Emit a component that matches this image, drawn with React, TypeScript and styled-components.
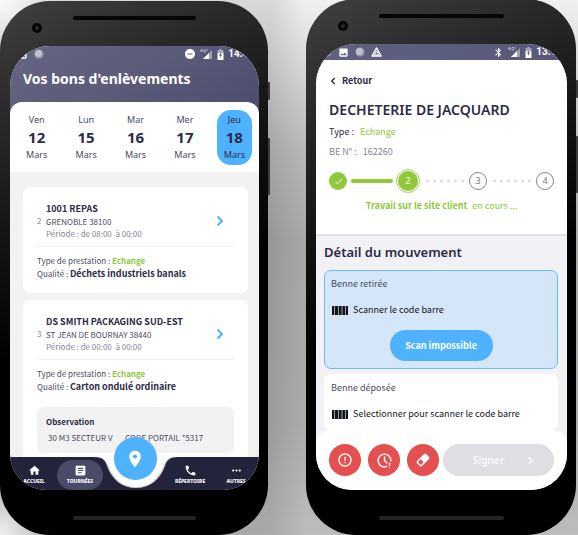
import React from "react";
import styled, { createGlobalStyle, css } from "styled-components";
import {
  MdArticle,
  MdBluetooth,
  MdCheck,
  MdDoNotDisturbOn,
  MdErrorOutline,
  MdHome,
  MdImage,
  MdLocationOn,
  MdMoreHoriz,
  MdPhone,
} from "react-icons/md";
import { TbClockExclamation } from "react-icons/tb";

const ui = '"Noto Sans", "Open Sans", sans-serif';
const body = '"Noto Sans CJK JP", "Noto Sans", sans-serif';

const color = {
  ink: "#2b2b45",
  text: "#4b4b63",
  muted: "#85859a",
  blue: "#4fb2ff",
  green: "#8fc93a",
  red: "#e44f4f",
  nav: "#23233b",
  page: "#f2f2f2",
};

const GlobalStyle = createGlobalStyle`
  *, *::before, *::after { box-sizing: border-box; }
  body { margin: 0; background: #a8a8a8; }
  button { font: inherit; color: inherit; border: 0; padding: 0; background: none; cursor: pointer; }
  a { color: inherit; text-decoration: none; }
  h1, h2, h3, p, ol, ul, dl { margin: 0; padding: 0; }
  ol, ul { list-style: none; }
`;

/* ---------- device ---------- */

const Stage = styled.main`
  display: flex;
  gap: 38px;
  height: 100vh;
  min-height: 535px;
  padding-right: 2px;
  overflow: hidden;
  font-family: ${ui};
  color: ${color.ink};
  background:
    radial-gradient(circle at 0 0, #fafafa 0, rgba(250, 250, 250, 0) 60px),
    radial-gradient(circle at 0 100%, #f2f2f2 0, rgba(242, 242, 242, 0) 60px),
    linear-gradient(90deg, rgba(0, 0, 0, 0.1) 270px, rgba(0, 0, 0, 0) 306px),
    linear-gradient(180deg, #f0f0f0 0, #dadada 60px, #b8b8b8 150px, #a8a8a8 240px, #acacac 420px, #bcbcbc 100%);
`;

const Phone = styled.section<{ $lift?: boolean }>`
  position: relative;
  flex: ${(p) => (p.$lift ? 270 : 268)} 1 0;
  min-width: 0;
  display: flex;
  flex-direction: column;
  margin-top: ${(p) => (p.$lift ? "-1px" : "1px")};
  padding: 0 9px 0 10px;
  border-radius: 50px;
  background: linear-gradient(155deg, #404040 0, #2c2c2c 16%, #141414 36%, #000 56%);
`;

const SideKeys = styled.div`
  position: absolute;
  top: 81px;
  left: 100%;
  width: 2px;
  display: grid;
  grid-template-rows: 18px 57px;
  gap: 38px;

  i {
    background: #3c3c3c;
    border-radius: 0 1px 1px 0;
  }
`;

const Earpiece = styled.div`
  flex: none;
  display: grid;
  grid-template-columns: 46px 1fr 46px;
  align-items: start;
  height: 45px;
  padding: 15px 17px 0;
`;

const Camera = styled.span`
  width: 10px;
  height: 10px;
  margin: 7px 0 0 5px;
  border-radius: 50%;
  border: 3px solid #050505;
  background: #2b2b2b;
`;

const Slot = styled.span<{ $dark?: boolean }>`
  height: 4px;
  border-radius: 2px;
  background: ${(p) => (p.$dark ? "#060606" : "#242424")};
`;

const Chin = styled.div`
  flex: none;
  height: 45px;
  padding: 26px 63px 0;
  display: grid;
  align-items: start;
`;

const Screen = styled.div`
  flex: 1;
  min-height: 0;
  display: flex;
  flex-direction: column;
  overflow: hidden;
  border-radius: 40px 40px 36px 36px;
  background: ${color.page};
`;

const Device = ({ lift, label, children }: { lift?: boolean; label: string; children: React.ReactNode }) => (
  <Phone $lift={lift} aria-label={label}>
    <SideKeys><i /><i /></SideKeys>
    <Earpiece><Camera /><Slot $dark /></Earpiece>
    <Screen>{children}</Screen>
    <Chin><Slot /></Chin>
  </Phone>
);

/* ---------- status bar ---------- */

const StatusBar = styled.div`
  flex: none;
  display: flex;
  align-items: center;
  justify-content: space-between;
  height: 16px;
  color: #fff;
  font-size: 10px;
  font-weight: 500;
  line-height: 16px;
  white-space: nowrap;
  font-family: Roboto, sans-serif;

  > span {
    display: flex;
    align-items: center;
  }
  svg { flex: none; }
`;

const LeftIcons = styled.span`
  gap: 6px;
`;

const RightIcons = styled.span`
  gap: 4px;
`;

const Dial = () => (
  <svg width="10" height="10" viewBox="0 0 10 10">
    <circle cx="5" cy="5" r="4.6" fill="#9a9aac" />
    <circle cx="4.4" cy="4.4" r="3.4" fill="#c2c2cc" />
  </svg>
);

const Signal = () => (
  <svg width="13" height="12" viewBox="0 0 13 12">
    <path d="M12 2v9H3z" fill="#9d9db3" />
    <path d="M9 5v6H3z" fill="#fff" />
    <path d="M1.500 1L.5 3h2M2 1.500V4M5.500 1.500H4V4h1.500V3M7 1v2" fill="none" stroke="#e4e4ee" strokeWidth=".6" />
  </svg>
);

const Battery = () => (
  <svg width="7" height="11" viewBox="0 0 7 11">
    <path d="M2.300 0h2.400v1.300H6.500V4H.5V1.300h1.800z" fill="#a9a9bb" />
    <path d="M.5 4h6v7h-6z" fill="#fff" />
    <path d="M4 3L2 6.500h1.300V9L5 5.500H3.900z" fill="#5c5c7a" />
  </svg>
);

const Warning = () => (
  <svg width="11" height="10" viewBox="0 0 11 10">
    <path d="M5.500 1L10 9H1z" fill="none" stroke="#fff" strokeWidth="1.500" strokeLinejoin="round" />
    <path d="M5.500 4L7.500 8h-4z" fill="none" stroke="#fff" strokeWidth="1" />
  </svg>
);

/* ---------- pick-up list screen ---------- */

const Hero = styled.header`
  flex: none;
  padding-bottom: 12px;
  background: linear-gradient(150deg, #666684 0, #5a5a79 50%, #4b4b6c 100%);

  ${StatusBar} {
    padding: 0 5px 0 7px;
  }
`;

const HeroTitle = styled.h1`
  margin: 7px 13px 13px;
  color: #fff;
  font-size: 14px;
  line-height: 20px;
  white-space: nowrap;
`;

const Days = styled.div`
  flex: none;
  display: grid;
  grid-template-columns: repeat(5, 1fr);
  margin-top: -12px;
  padding: 8px 0 7px 2px;
  border-radius: 12px 12px 0 0;
  background: #fff;
`;

const Day = styled.button<{ $on?: boolean }>`
  justify-self: center;
  width: 35px;
  padding: 2px 0;
  border-radius: 14px;
  text-align: center;
  font-size: 9px;
  line-height: 16px;
  color: ${(p) => (p.$on ? color.ink : color.text)};
  ${(p) => p.$on && css`background: ${color.blue};`}

  span, strong { display: block; }
  strong {
    font-size: 15px;
    line-height: 19px;
    color: ${color.ink};
  }
`;

const Orders = styled.div`
  flex: 1;
  min-height: 0;
  overflow: hidden;
  display: flex;
  flex-direction: column;
  gap: 7px;
  padding: 15px 11px 0 13px;
  font-family: ${body};
`;

const OrderCard = styled.article`
  flex: none;
  padding: 14px 14px 13px;
  border-radius: 7px;
  background: #fff;
  font-size: 8px;
  line-height: 13px;
  color: ${color.text};
  white-space: nowrap;
`;

const OrderHead = styled.div`
  display: grid;
  grid-template-columns: 9px 1fr 28px;
  align-items: center;
  padding-bottom: 6px;
  margin-bottom: 7px;
  border-bottom: 1px solid #efeff2;
`;

const Rank = styled.span`
  color: ${color.muted};
`;

const Place = styled.div`
  line-height: 12px;

  h2 {
    font-size: 9px;
    line-height: 15px;
    color: ${color.ink};
  }
`;

const Muted = styled.p`
  color: ${color.muted};
`;

const Open = styled.button`
  display: grid;
  justify-content: center;
  color: ${color.blue};
`;

const Strong = styled.strong<{ $green?: boolean }>`
  font-size: ${(p) => (p.$green ? "8px" : "9px")};
  color: ${(p) => (p.$green ? color.green : color.ink)};
`;

const Note = styled.div`
  margin-top: 14px;
  padding: 7px 9px;
  border-radius: 7px;
  background: #f2f2f2;
  line-height: 16px;

  h3 {
    font-size: 8px;
    line-height: 16px;
    color: ${color.ink};
  }
  p {
    padding-left: 2px;
    white-space: pre;
  }
`;

const TabBar = styled.nav`
  position: relative;
  flex: none;
  display: grid;
  grid-template-columns: 1fr 1fr 64px 1fr 1fr;
  height: 33px;
  padding: 3px 0 0 1px;
  color: #fff;
  background: ${color.nav};
`;

const Notch = styled.svg`
  position: absolute;
  top: 0;
  left: 50%;
  margin-left: -41px;
`;

const Tab = styled.a<{ $on?: boolean }>`
  position: relative;
  justify-self: center;
  display: flex;
  flex-direction: column;
  align-items: center;
  width: 46px;
  height: 30px;
  padding-top: 4px;
  border-radius: 15px;
  font-size: 5px;
  font-weight: 800;
  line-height: 8px;
  ${(p) => p.$on && css`background: #4b4b69;`}
`;

const Locate = styled.button`
  position: relative;
  justify-self: center;
  display: grid;
  place-items: center;
  width: 43px;
  height: 43px;
  margin-top: -23px;
  border-radius: 50%;
  color: #fff;
  background: ${color.blue};
`;

const Chevron = ({ size, width, back }: { size: number; width: number; back?: boolean }) => (
  <svg width={size} height={size} viewBox="0 0 12 12" fill="none" stroke="currentColor" strokeWidth={width}>
    <path d={back ? "M8.500 1.500L4 6l4.500 4.500" : "M3.500 1.500L8 6l-4.500 4.500"} />
  </svg>
);

const days = [
  ["Ven", "12"],
  ["Lun", "15"],
  ["Mar", "16"],
  ["Mer", "17"],
  ["Jeu", "18"],
];

const orders = [
  { rank: 2, name: "1001 REPAS", city: "GRENOBLE 38100", from: "08:00", quality: "Déchets industriels banals" },
  {
    rank: 3,
    name: "DS SMITH PACKAGING SUD-EST",
    city: "ST JEAN DE BOURNAY 38440",
    from: "00:00",
    quality: "Carton ondulé ordinaire",
    note: "30 M3 SECTEUR V       CODE PORTAIL *5317",
  },
];

const PickupScreen = () => (
  <>
    <Hero>
      <StatusBar>
        <LeftIcons><MdImage size={11} /><Dial /></LeftIcons>
        <RightIcons><MdDoNotDisturbOn size={12} /><Signal /><Battery /><b>14:41</b></RightIcons>
      </StatusBar>
      <HeroTitle>Vos bons d'enlèvements</HeroTitle>
    </Hero>
    <Days>
      {days.map(([name, n]) => (
        <Day key={n} $on={n === "18"} aria-pressed={n === "18"}>
          <span>{name}</span>
          <strong>{n}</strong>
          <span>Mars</span>
        </Day>
      ))}
    </Days>
    <Orders>
      {orders.map((o) => (
        <OrderCard key={o.rank}>
          <OrderHead>
            <Rank>{o.rank}</Rank>
            <Place>
              <h2>{o.name}</h2>
              <p>{o.city}</p>
              <Muted>Période : de {o.from}&nbsp; à 00:00</Muted>
            </Place>
            <Open aria-label={"Ouvrir " + o.name}><Chevron size={12} width={2} /></Open>
          </OrderHead>
          <p>Type de prestation : <Strong $green>Echange</Strong></p>
          <p>Qualité : <Strong>{o.quality}</Strong></p>
          {o.note && (
            <Note>
              <h3>Observation</h3>
              <p>{o.note}</p>
            </Note>
          )}
        </OrderCard>
      ))}
    </Orders>
    <TabBar>
      <Notch width="84" height="33" viewBox="0 0 84 33">
        <path d="M0 0C8 0 11 3 13 9C18 23 28 31 42 31S66 23 71 9C73 3 76 0 84 0z" fill="#c9c9d2" />
        <path d="M3 0C10 0 12 3 14 8C19 22 29 30 42 30S65 22 70 8C72 3 74 0 81 0z" fill="#fff" />
      </Notch>
      <Tab href="#accueil"><MdHome size={13} />ACCUEIL</Tab>
      <Tab href="#tournees" $on><MdArticle size={13} />TOURNÉES</Tab>
      <Locate aria-label="Localiser"><MdLocationOn size={20} /></Locate>
      <Tab href="#repertoire"><MdPhone size={13} />RÉPERTOIRE</Tab>
      <Tab href="#autres"><MdMoreHoriz size={13} />AUTRES</Tab>
    </TabBar>
  </>
);

/* ---------- movement screen ---------- */

const DarkStatus = styled(StatusBar)`
  padding: 0 5px 0 6px;
  background: linear-gradient(90deg, #606080, #585879);
`;

const Summary = styled.header`
  flex: none;
  padding: 13px 13px 18px;
  border-bottom: 2px solid #dfdfe3;
  background: #fff;
  white-space: nowrap;
  font-size: 9px;
  line-height: 20px;
  font-family: ${body};
`;

const Back = styled.a`
  display: flex;
  align-items: center;
  gap: 5px;
  height: 16px;
  font-weight: 700;
`;

const SiteName = styled.h1`
  margin: 11px 0 2px;
  font-family: ${ui};
  font-size: 14px;
  font-weight: 600;
  line-height: 20px;
`;

const Field = styled.p<{ $muted?: boolean }>`
  color: ${(p) => (p.$muted ? color.muted : color.ink)};

  span {
    margin-left: 4px;
    color: ${(p) => (p.$muted ? color.muted : color.green)};
  }
`;

const Steps = styled.ol`
  display: flex;
  align-items: center;
  justify-content: space-between;
  height: 24px;
  margin-top: 7px;
`;

const Step = styled.li<{ $state: "done" | "now" | "todo" }>`
  flex: none;
  display: grid;
  place-items: center;
  width: 18px;
  height: 18px;
  border-radius: 50%;
  font-family: ${ui};
  font-size: 9px;
  line-height: 12px;
  ${(p) =>
    p.$state === "todo"
      ? css`
          border: 1px solid #85859a;
          color: #77778c;
        `
      : css`
          color: #fff;
          background: ${color.green};
        `}
  ${(p) =>
    p.$state === "now" &&
    css`
      width: 24px;
      height: 24px;
      border: 1px solid #b5dc7c;
      box-shadow: inset 0 0 0 1px #fff;
    `}
`;

const Bar = styled.li`
  flex: none;
  width: 42px;
  height: 4px;
  border-radius: 2px;
  background: ${color.green};
`;

const Dots = styled.li`
  flex: none;
  width: 42px;
  height: 4px;
  background: radial-gradient(circle at 50% 50%, #dcdce2 1px, transparent 2px) 0 0 / 7px 4px;
`;

const Progress = styled.p`
  margin-top: 3px;
  text-align: center;
  color: ${color.green};

  span { margin-left: 3px; }
`;

const Detail = styled.div`
  flex: 1;
  min-height: 0;
  display: flex;
  flex-direction: column;
  gap: 5px;
  padding: 6px 9px 0 8px;
  overflow: hidden;
  background: #f2f2f6;
  font-family: ${body};
`;

const DetailTitle = styled.h2`
  margin-bottom: 3px;
  font-family: ${ui};
  font-size: 13px;
  font-weight: 600;
  line-height: 20px;
  white-space: nowrap;
`;

const Bin = styled.section<{ $active?: boolean }>`
  flex: none;
  display: flex;
  flex-direction: column;
  padding: 5px 6px 7px;
  border: 1px solid ${(p) => (p.$active ? "#6cbaff" : "#fff")};
  border-radius: 7px;
  background: ${(p) => (p.$active ? "#d4e6f8" : "#fff")};
  font-size: 9px;
  line-height: 16px;
  color: ${color.text};
  white-space: nowrap;
`;

const Scan = styled.div`
  display: flex;
  align-items: center;
  gap: 5px;
  margin-top: 10px;
  padding-left: 1px;
  color: #15151c;
`;

const PrimaryButton = styled.button`
  align-self: center;
  min-width: 103px;
  height: 31px;
  margin-top: 12px;
  border-radius: 16px;
  font-size: 9px;
  font-weight: 700;
  color: #fff;
  background: ${color.blue};
`;

const Actions = styled.footer`
  position: relative;
  flex: none;
  display: flex;
  align-items: center;
  gap: 7px;
  height: 60px;
  margin-top: -14px;
  padding: 0 13px;
  border-radius: 14px 14px 0 0;
  background: #fff;
  font-family: ${ui};
`;

const RoundButton = styled.button`
  flex: none;
  display: grid;
  place-items: center;
  width: 32px;
  height: 32px;
  border-radius: 50%;
  color: #fff;
  background: ${color.red};
`;

const SignButton = styled.button`
  flex: 1;
  display: grid;
  grid-template-columns: 1fr 22px;
  align-items: center;
  height: 32px;
  margin-left: -3px;
  padding: 0 13px 0 15px;
  border-radius: 16px;
  color: #f7f7fa;
  background: #dedee3;
  font-size: 10px;
  font-weight: 700;

  svg { justify-self: center; }
`;

const Barcode = () => (
  <svg width="16" height="9" viewBox="0 0 16 9">
    <path d="M0 0h16v9H0z" fill="#9aa0a8" />
    <path d="M0 0h2v9H0zM3 0h3v9H3zM7 0h2v9H7zM9.500 0h1v9h-1zM11 0h2v9h-2zM14 0h2v9h-2z" fill="#15151c" />
  </svg>
);

const Eraser = () => (
  <svg width="16" height="16" viewBox="0 0 16 16">
    <g transform="rotate(-45 8 8)">
      <rect x="1.500" y="4.500" width="13" height="7" rx="1.500" fill="#fff" />
      <rect x="2.900" y="5.900" width="4" height="4.200" rx=".8" fill="#e44f4f" />
    </g>
  </svg>
);

const MovementScreen = () => (
  <>
    <DarkStatus>
      <LeftIcons><Dial /><MdImage size={11} /><Dial /><Warning /></LeftIcons>
      <RightIcons><MdBluetooth size={11} /><Signal /><Battery /><b>13:14</b></RightIcons>
    </DarkStatus>
    <Summary>
      <Back href="#retour"><Chevron size={8} width={2} back />Retour</Back>
      <SiteName>DECHETERIE DE JACQUARD</SiteName>
      <Field>Type : <span>Echange</span></Field>
      <Field $muted>BE N° : <span>162260</span></Field>
      <Steps>
        <Step $state="done"><MdCheck size={9} /></Step>
        <Bar aria-hidden />
        <Step $state="now">2</Step>
        <Dots aria-hidden />
        <Step $state="todo">3</Step>
        <Dots aria-hidden />
        <Step $state="todo">4</Step>
      </Steps>
      <Progress><strong>Travail sur le site client</strong> <span>en cours ...</span></Progress>
    </Summary>
    <Detail>
      <DetailTitle>Détail du mouvement</DetailTitle>
      <Bin $active>
        <p>Benne retirée</p>
        <Scan><Barcode />Scanner le code barre</Scan>
        <PrimaryButton>Scan impossible</PrimaryButton>
      </Bin>
      <Bin>
        <p>Benne déposée</p>
        <Scan><Barcode />Selectionner pour scanner le code barre</Scan>
      </Bin>
    </Detail>
    <Actions>
      <RoundButton aria-label="Signaler un problème"><MdErrorOutline size={16} /></RoundButton>
      <RoundButton aria-label="Signaler un retard"><TbClockExclamation size={17} /></RoundButton>
      <RoundButton aria-label="Effacer"><Eraser /></RoundButton>
      <SignButton><span>Signer</span><Chevron size={9} width={2} /></SignButton>
    </Actions>
  </>
);

export default function App() {
  return (
    <>
      <GlobalStyle />
      <Stage>
        <Device label="Bons d'enlèvements"><PickupScreen /></Device>
        <Device label="Détail du mouvement" lift><MovementScreen /></Device>
      </Stage>
    </>
  );
}
